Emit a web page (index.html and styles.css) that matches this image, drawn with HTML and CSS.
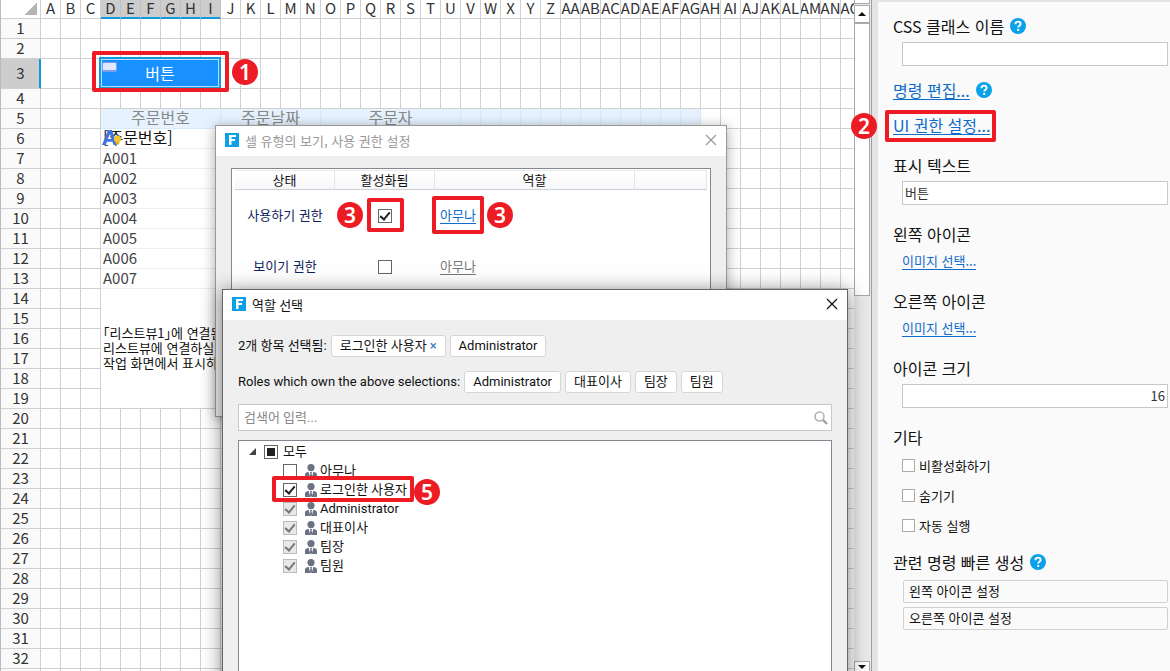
FILE: index.html
```html
<!DOCTYPE html>
<html lang="ko">
<head>
    <meta charset="UTF-8">
    <meta name="viewport" content="width=device-width, initial-scale=1.0">
    <title>셀 유형의 보기, 사용 권한 설정</title>
    <link rel="stylesheet" href="styles.css">
</head>
<body>

<svg class="defs" aria-hidden="true">
    <symbol id="logo" viewBox="0 0 14 14">
        <rect width="14" height="14" fill="#0aa1e8"/>
        <path d="M4 2h7v2H6.5v2H10v2H6.5v4H4z" fill="#fff"/>
    </symbol>
    <symbol id="close" viewBox="0 0 12 12">
        <path d="M1 1l10 10M11 1L1 11" fill="none" stroke="currentColor" stroke-width="1.2"/>
    </symbol>
    <symbol id="help" viewBox="0 0 16 16">
        <circle cx="8" cy="8" r="8" fill="#0aa1e8"/>
        <path d="M5.4 6.2C5.4 4.500 6.500 3.600 8 3.600s2.600.9 2.600 2.300c0 1.800-2.400 1.900-2.400 3.700" fill="none" stroke="#fff" stroke-width="1.900"/>
        <rect x="7.200" y="10.900" width="2" height="2" fill="#fff"/>
    </symbol>
    <symbol id="user" viewBox="0 0 14 14">
        <circle cx="7" cy="3.600" r="3.600" fill="#6b7284"/>
        <path d="M1 14v-3.200C1 9 2.600 8.200 4.600 7.800L6.300 14zM13 14v-3.200c0-1.800-1.600-2.600-3.600-3L7.700 14z" fill="#6b7284"/>
        <path d="M6 8h2l-.4 1.600L8.300 13 7 14l-1.300-1 .7-3.400z" fill="#6b7284"/>
    </symbol>
</svg>

<div class="app">
    <main class="sheet" id="sheet">
        <table class="grid" id="grid"></table>
        <div class="mark mark-button"><span class="badge">1</span></div>
    </main>

    <div class="scrollbar">
        <div class="split-handle"></div>
        <button class="scroll-btn up" aria-label="위로"></button>
        <div class="thumb"></div>
        <button class="scroll-btn down" aria-label="아래로"></button>
    </div>

    <aside class="panel">
        <div class="field tight">
            <label class="title" for="css-class">CSS 클래스 이름 <svg class="help"><use href="#help"/></svg></label>
            <input class="text-input" id="css-class" type="text">
        </div>
        <div class="field tight title">
            <a href="#">명령 편집...</a> <svg class="help"><use href="#help"/></svg>
        </div>
        <div class="field title marked">
            <a href="#">UI 권한 설정...</a>
            <div class="mark mark-ui"><span class="badge">2</span></div>
        </div>
        <div class="field">
            <label class="title" for="label-text">표시 텍스트</label>
            <input class="text-input" id="label-text" type="text" value="버튼">
        </div>
        <div class="field">
            <div class="title">왼쪽 아이콘</div>
            <div class="image-link"><a href="#">이미지 선택...</a></div>
        </div>
        <div class="field">
            <div class="title">오른쪽 아이콘</div>
            <div class="image-link"><a href="#">이미지 선택...</a></div>
        </div>
        <div class="field">
            <label class="title" for="icon-size">아이콘 크기</label>
            <input class="text-input number" id="icon-size" type="text" value="16">
        </div>
        <div class="field options">
            <div class="title">기타</div>
            <label><input class="check" type="checkbox">비활성화하기</label>
            <label><input class="check" type="checkbox">숨기기</label>
            <label><input class="check" type="checkbox">자동 실행</label>
        </div>
        <div class="field">
            <div class="title">관련 명령 빠른 생성 <svg class="help"><use href="#help"/></svg></div>
            <div class="commands">
                <button>왼쪽 아이콘 설정</button>
                <button>오른쪽 아이콘 설정</button>
            </div>
        </div>
    </aside>

    <section class="dialog permissions">
        <header class="dialog-title">
            <svg class="logo"><use href="#logo"/></svg>
            <h2>셀 유형의 보기, 사용 권한 설정</h2>
            <button class="close-btn" aria-label="닫기"><svg><use href="#close"/></svg></button>
        </header>
        <div class="dialog-body">
            <div class="list-box">
                <table class="perm-table">
                    <colgroup><col class="narrow"><col class="narrow"><col class="wide"><col></colgroup>
                    <thead>
                        <tr><th>상태</th><th>활성화됨</th><th>역할</th><th></th></tr>
                    </thead>
                    <tbody>
                        <tr>
                            <td>사용하기 권한</td>
                            <td><input class="check dark" type="checkbox" aria-label="사용하기 권한" checked></td>
                            <td class="role"><a href="#">아무나</a></td>
                            <td></td>
                        </tr>
                        <tr>
                            <td>보이기 권한</td>
                            <td><input class="check dark" type="checkbox" aria-label="보이기 권한"></td>
                            <td class="role"><a class="off" href="#">아무나</a></td>
                            <td></td>
                        </tr>
                    </tbody>
                </table>
            </div>
        </div>
        <div class="mark mark-enabled"><span class="badge">3</span></div>
        <div class="mark mark-role"><span class="badge">3</span></div>
    </section>

    <section class="dialog roles">
        <header class="dialog-title">
            <svg class="logo"><use href="#logo"/></svg>
            <h2>역할 선택</h2>
            <button class="close-btn" aria-label="닫기"><svg><use href="#close"/></svg></button>
        </header>
        <div class="dialog-body">
            <div class="chips">
                <span>2개 항목 선택됨:</span>
                <span class="chip">로그인한 사용자<button aria-label="제거">×</button></span>
                <span class="chip">Administrator</span>
            </div>
            <div class="chips">
                <span>Roles which own the above selections:</span>
                <span class="chip">Administrator</span>
                <span class="chip">대표이사</span>
                <span class="chip">팀장</span>
                <span class="chip">팀원</span>
            </div>
            <div class="search">
                <input type="text" placeholder="검색어 입력..." aria-label="검색어 입력">
                <svg viewBox="0 0 14 14">
                    <circle cx="5.500" cy="5.500" r="4.500" fill="none" stroke="#b0b0b0" stroke-width="1.500"/>
                    <path d="M9 9l4 4" stroke="#a0a0a0" stroke-width="2.400"/>
                </svg>
            </div>
            <div class="tree">
                <div class="node">
                    <svg class="expander" viewBox="0 0 7 7"><path d="M7 0v7H0z" fill="#444"/></svg>
                    <label><input class="check dark partial" type="checkbox">모두</label>
                </div>
                <label class="leaf"><input class="check dark" type="checkbox"><svg><use href="#user"/></svg>아무나</label>
                <label class="leaf"><input class="check dark" type="checkbox" checked><svg><use href="#user"/></svg>로그인한 사용자</label>
                <label class="leaf"><input class="check dark" type="checkbox" checked disabled><svg><use href="#user"/></svg>Administrator</label>
                <label class="leaf"><input class="check dark" type="checkbox" checked disabled><svg><use href="#user"/></svg>대표이사</label>
                <label class="leaf"><input class="check dark" type="checkbox" checked disabled><svg><use href="#user"/></svg>팀장</label>
                <label class="leaf"><input class="check dark" type="checkbox" checked disabled><svg><use href="#user"/></svg>팀원</label>
            </div>
        </div>
        <div class="mark mark-user"><span class="badge">5</span></div>
    </section>
</div>

<script>
    const grid = document.getElementById('grid');
    const sheet = document.getElementById('sheet');

    // Enough columns and rows to fill the window
    const COLS = Math.max(33, Math.ceil((sheet.clientWidth - 40) / 20));
    const ROWS = Math.max(20, Math.ceil((sheet.clientHeight - 29) / 20));

    const cellIcon = '<svg class="cell-icon" viewBox="0 0 20 18">' +
        '<path d="M0 16L6 1h4l5 15h-3.500l-1-3.300H4.800L3.500 16zM5.800 10h3.700L8 5z" fill="#3f74e0"/>' +
        '<circle cx="15.500" cy="10" r="3.500" fill="#f4c430"/><path d="M13.500 13h4l-.5 2.500h-3z" fill="#e0b020"/></svg>';

    // Merged cells: row -> list of [column, colspan, rowspan, class, html]
    const merged = {
        3: [[3, 6, 1, 'button-cell', '<button class="sheet-button"><i></i>버튼</button>']],
        5: [
            [3, 6, 1, 'list-head', '주문번호'],
            [9, 5, 1, 'list-head', '주문날짜'],
            [14, 7, 1, 'list-head', '주문자']
        ],
        6: [[3, 30, 1, 'list-row field-name', cellIcon + '[주문번호]']],
        14: [[3, 30, 6, 'note', '「리스트뷰1」에 연결된<br>리스트뷰에 연결하실<br>작업 화면에서 표시하']]
    };
    for (let i = 1; i <= 7; i++) {
        merged[6 + i] = [[3, 30, 1, 'list-row', 'A00' + i]];
    }
    for (let c = 21; c < 33; c++) {
        merged[5].push([c, 1, 1, 'list-head', '']);
    }

    function columnName(i) {
        const last = String.fromCharCode(65 + i % 26);
        return i < 26 ? last : String.fromCharCode(64 + Math.floor(i / 26)) + last;
    }

    let html = '<colgroup><col class="row-col"><col span="' + COLS + '"></colgroup>';
    html += '<thead><tr><th class="corner"><i></i></th>';
    for (let c = 0; c < COLS; c++) {
        const selected = c >= 3 && c <= 8 ? ' class="selected"' : '';
        html += '<th' + selected + '><div>' + columnName(c) + '</div></th>';
    }
    html += '</tr></thead><tbody>';

    for (let r = 1; r <= ROWS; r++) {
        html += '<tr' + (r === 3 ? ' class="tall"' : '') + '><th>' + r + '</th>';
        for (let c = 0; c < COLS; c++) {
            if (r > 14 && r < 20 && c >= 3 && c < 33) continue;
            const cell = (merged[r] || []).find(m => m[0] === c);
            if (cell) {
                html += '<td colspan="' + cell[1] + '" rowspan="' + cell[2] + '" class="' + cell[3] + '">' + cell[4] + '</td>';
                c += cell[1] - 1;
            } else {
                html += '<td></td>';
            }
        }
        html += '</tr>';
    }
    grid.style.width = 40 + COLS * 20 + 'px';
    grid.innerHTML = html + '</tbody>';
    document.querySelector('.partial').indeterminate = true;
</script>

</body>
</html>
```
FILE: styles.css
```css
*, *::before {
    box-sizing: border-box;
}
body {
    margin: 0;
    font-family: "Noto Sans CJK KR", sans-serif;
    font-size: 13px;
    color: #111;
    background: #fff;
}
button, input {
    font: inherit;
    color: inherit;
    margin: 0;
}
svg {
    display: block;
    flex: none;
}
a {
    color: #0f6ccb;
    text-decoration: none;
    border-bottom: 1px solid #0f6ccb;
}
.defs {
    position: absolute;
    width: 0;
    height: 0;
}
.app {
    position: relative;
    display: flex;
    height: 100vh;
    overflow: hidden;
}

/* Sheet */
.sheet {
    position: relative;
    flex: 1;
    min-width: 0;
    overflow: hidden;
    border-left: 1px solid #bbb;
}
.grid {
    table-layout: fixed;
    border-collapse: separate;
    border-spacing: 0;
    font-size: 15px;
}
.grid col {
    width: 20px;
}
.grid .row-col {
    width: 40px;
}
.grid th, .grid td {
    height: 20px;
    padding: 0 0 2px;
    line-height: 17px;
    border-right: 1px solid #d0d0d0;
    border-bottom: 1px solid #d0d0d0;
    font-weight: normal;
    white-space: nowrap;
}
.grid th {
    color: #333;
}
.grid thead th {
    height: 19px;
    padding: 0;
}
.grid thead div {
    display: flex;
    justify-content: center;
    height: 18px;
    line-height: 16px;
    overflow-x: clip;
}
.grid thead .selected {
    background: #cdcdcd;
    box-shadow: inset 0 -1px #109bdc;
    border-right-color: #c0c0c0;
    border-bottom-color: #109bdc;
}
.grid tbody th {
    background: #fafafa;
}
.grid .tall th, .grid .tall td {
    height: 30px;
}
.grid .tall th {
    background: #cdcdcd;
    border-right-color: #109bdc;
    box-shadow: inset -1px 0 #109bdc;
}
.corner i {
    display: block;
    width: 12px;
    height: 12px;
    margin-left: 24px;
    background: linear-gradient(135deg, transparent 50%, #b4b4b4 50%);
}
.grid .list-head {
    background: #e6f3ff;
    border-color: #d6eaff;
    color: #888;
    font-size: 16px;
    text-align: center;
}
.grid .list-row {
    padding-left: 2px;
    border-bottom-color: #eee;
    color: #444;
}
.grid .field-name {
    position: relative;
    color: #111;
    font-size: 16px;
}
.cell-icon {
    position: absolute;
    left: 1px;
    top: 0;
    width: 20px;
    height: 18px;
}
.grid .note {
    padding-left: 2px;
    font-size: 13px;
    line-height: 15px;
    font-feature-settings: "halt";
}
.grid .button-cell {
    position: relative;
}
.sheet-button {
    position: absolute;
    left: -2px;
    top: -2px;
    width: calc(100% + 3px);
    height: calc(100% + 3px);
    padding: 0;
    border: 2px solid #109bdc;
    background: #1890ff;
    box-shadow: inset 0 0 0 1px #b9dcff;
    color: #fff;
    font-size: 16px;
}
.sheet-button i {
    position: absolute;
    left: 1px;
    top: 3px;
    width: 15px;
    height: 10px;
    border: 1px solid #7f9df0;
    border-bottom-width: 2px;
    border-radius: 2px;
    background: #dfe8ff;
}

.scrollbar {
    flex: 0 0 18px;
    display: flex;
    flex-direction: column;
    padding: 0 1px 0 0;
    background: #e9e9e9;
    border-right: 1px solid #a0a0a0;
}
.split-handle {
    height: 4px;
    margin-bottom: 1px;
    border: 1px solid #a8a8a8;
    border-top: 0;
    background: #fff;
}
.scroll-btn {
    height: 18px;
    flex: none;
    padding: 0;
    border: 1px solid #a8a8a8;
    background: #fff;
    display: flex;
    align-items: center;
    justify-content: center;
}
.scroll-btn::before {
    content: "";
    border: 4px solid transparent;
    border-top: 0;
    border-bottom-color: #111;
}
.scroll-btn.down {
    height: 10px;
    margin-top: auto;
    border-bottom: 0;
}
.scroll-btn.down::before {
    border: 4px solid transparent;
    border-bottom: 0;
    border-top-color: #111;
}
.thumb {
    height: 273px;
    border: 1px solid #a8a8a8;
    background: #fff;
}

/* Property panel */
.panel {
    flex: 0 0 298px;
    padding: 15px 2px 0 15px;
    border-left: 6px solid #e4e4e4;
    border-top: 2px solid #e4e4e4;
    background: #fafafa;
}
.field {
    margin-bottom: 20px;
}
.field.tight {
    margin-bottom: 15px;
}
.title {
    display: flex;
    align-items: center;
    gap: 6px;
    height: 20px;
    padding-bottom: 2px;
    font-size: 16px;
    line-height: 18px;
}
.help {
    width: 16px;
    height: 16px;
}
.marked {
    position: relative;
}
.text-input {
    display: block;
    width: calc(100% - 9px);
    height: 24px;
    margin: 5px 0 0 9px;
    padding: 0 2px 2px;
    border: 1px solid #c8c8c8;
    background: #fff;
    color: #333;
}
.text-input.number {
    text-align: right;
}
.image-link {
    margin: 5px 0 0 9px;
    line-height: 22px;
}
.image-link a {
    display: inline-block;
    line-height: 16px;
}
.options {
    margin-bottom: 13px;
}
.options .title {
    margin-bottom: 2px;
}
.options label {
    display: flex;
    align-items: center;
    gap: 4px;
    height: 30px;
    margin-left: 9px;
}
.commands {
    display: flex;
    flex-direction: column;
    gap: 4px;
    margin: 7px 0 0 10px;
}
.commands button {
    height: 23px;
    padding: 0 5px 2px;
    border: 1px solid #d0d0d0;
    border-radius: 2px;
    background: #fafafa;
    line-height: 18px;
    text-align: left;
}

.check {
    appearance: none;
    flex: none;
    display: inline-block;
    width: 13px;
    height: 13px;
    border: 1px solid #aaa;
    background: #fff;
}
.check.dark {
    width: 14px;
    height: 14px;
    border-color: #666;
}
.check:checked::before {
    content: "";
    display: block;
    width: 6px;
    height: 10px;
    margin: 0 0 0 3px;
    border: solid #222;
    border-width: 0 2px 2px 0;
    transform: rotate(40deg);
}
.check:indeterminate::before {
    content: "";
    display: block;
    width: 8px;
    height: 8px;
    margin: 2px;
    background: #222;
}
.check.dark:disabled {
    border-color: #bbb;
    background: #e8e8e8;
}
.check:disabled::before {
    border-color: #777;
}

/* Dialogs */
.dialog {
    position: absolute;
    border: 1px solid #999;
    background: #efefef;
    box-shadow: 0 2px 12px rgba(0, 0, 0, 0.35);
}
.permissions {
    left: 215px;
    top: 125px;
    width: 512px;
}
.roles {
    left: 222px;
    top: 289px;
    bottom: -20px;
    width: 626px;
    border-color: #666;
    box-shadow: 0 2px 18px rgba(0, 0, 0, 0.5);
    display: flex;
    flex-direction: column;
    font-family: Roboto, "Noto Sans CJK KR", sans-serif;
}
.dialog-title {
    display: flex;
    align-items: center;
    height: 30px;
    padding: 0 9px 2px;
    background: #fff;
}
.dialog-title h2 {
    flex: 1;
    margin: 0 0 0 6px;
    font-size: 13px;
    font-weight: normal;
}
.permissions .dialog-title {
    color: #999;
}
.logo {
    width: 14px;
    height: 14px;
}
.close-btn {
    padding: 0;
    border: 0;
    background: none;
}
.close-btn svg {
    width: 12px;
    height: 12px;
}
.permissions .dialog-body {
    padding: 12px 15px;
}
.list-box {
    height: 236px;
    padding: 1px 3px 0;
    border: 1px solid #828790;
    background: #fff;
}
.perm-table {
    width: 100%;
    table-layout: fixed;
    border-collapse: separate;
    border-spacing: 0;
    color: #10225e;
    text-align: center;
}
.perm-table .narrow {
    width: 100px;
}
.perm-table .wide {
    width: 200px;
}
.perm-table th {
    height: 20px;
    padding: 0;
    border-top: 1px solid #e8e8e8;
    border-right: 1px solid #e4e4e4;
    border-bottom: 1px solid #d0d0d4;
    background: linear-gradient(#fff, #f6f7f9);
    color: #111;
    font-weight: normal;
    line-height: 18px;
}
.perm-table td {
    height: 51px;
    padding: 0 5px 2px;
}
.perm-table .check {
    vertical-align: middle;
}
.perm-table .role {
    text-align: left;
}
.role a {
    display: inline-block;
    line-height: 16px;
}
.role .off {
    color: #777;
    border-color: #777;
}

.roles .dialog-body {
    flex: 1;
    display: flex;
    flex-direction: column;
    padding: 15px 15px 0;
}
.chips {
    display: flex;
    align-items: center;
    gap: 4px;
    height: 22px;
    margin-bottom: 14px;
    line-height: 18px;
}
.chip {
    display: flex;
    align-items: center;
    height: 22px;
    padding: 0 8px;
    border: 1px solid #d6d6d6;
    border-radius: 3px;
    background: #fff;
}
.chip button {
    padding: 0 0 0 3px;
    border: 0;
    background: none;
    color: #2f74bd;
    line-height: 16px;
}
.search {
    display: flex;
    align-items: center;
    height: 27px;
    padding: 0 3px 0 5px;
    margin: -3px 0 9px;
    border: 1px solid #c8c8c8;
    background: #fff;
}
.search input {
    flex: 1;
    padding: 0;
    border: 0;
    outline: 0;
    background: none;
}
.search input::placeholder {
    color: #888;
}
.search svg {
    width: 14px;
    height: 14px;
}
.tree {
    flex: 1;
    padding: 1px 10px;
    border: 1px solid #828790;
    background: #fff;
}
.node, .node label, .leaf {
    display: flex;
    align-items: center;
    height: 19px;
    line-height: 19px;
}
.expander {
    width: 7px;
    height: 7px;
    margin-right: 8px;
}
.node label {
    gap: 5px;
}
.leaf {
    margin-left: 34px;
}
.leaf svg {
    width: 14px;
    height: 14px;
    margin: 0 2px 0 7px;
}

/* Numbered callouts */
.mark {
    position: absolute;
    border: 4px solid #ed1c24;
    border-radius: 2px;
    pointer-events: none;
}
.badge {
    position: absolute;
    top: 50%;
    width: 26px;
    height: 26px;
    margin-top: -13px;
    border-radius: 50%;
    background: #ed1c24;
    color: #fff;
    font: 600 21px/26px "Noto Sans", sans-serif;
    text-align: center;
}
.mark-button {
    left: 91px;
    top: 51px;
    width: 137px;
    height: 41px;
}
.mark-button .badge {
    right: -33px;
}
.mark-ui {
    left: -8px;
    top: -6px;
    width: 111px;
    height: 32px;
}
.mark-ui .badge {
    left: -38px;
}
.mark-enabled {
    left: 151px;
    top: 72px;
    width: 37px;
    height: 34px;
}
.mark-enabled .badge {
    left: -34px;
}
.mark-role {
    left: 216px;
    top: 70px;
    width: 52px;
    height: 38px;
}
.mark-role .badge {
    right: -33px;
}
.mark-user {
    left: 49px;
    top: 186px;
    width: 142px;
    height: 26px;
}
.mark-user .badge {
    top: 12px;
    right: -30px;
}
```
